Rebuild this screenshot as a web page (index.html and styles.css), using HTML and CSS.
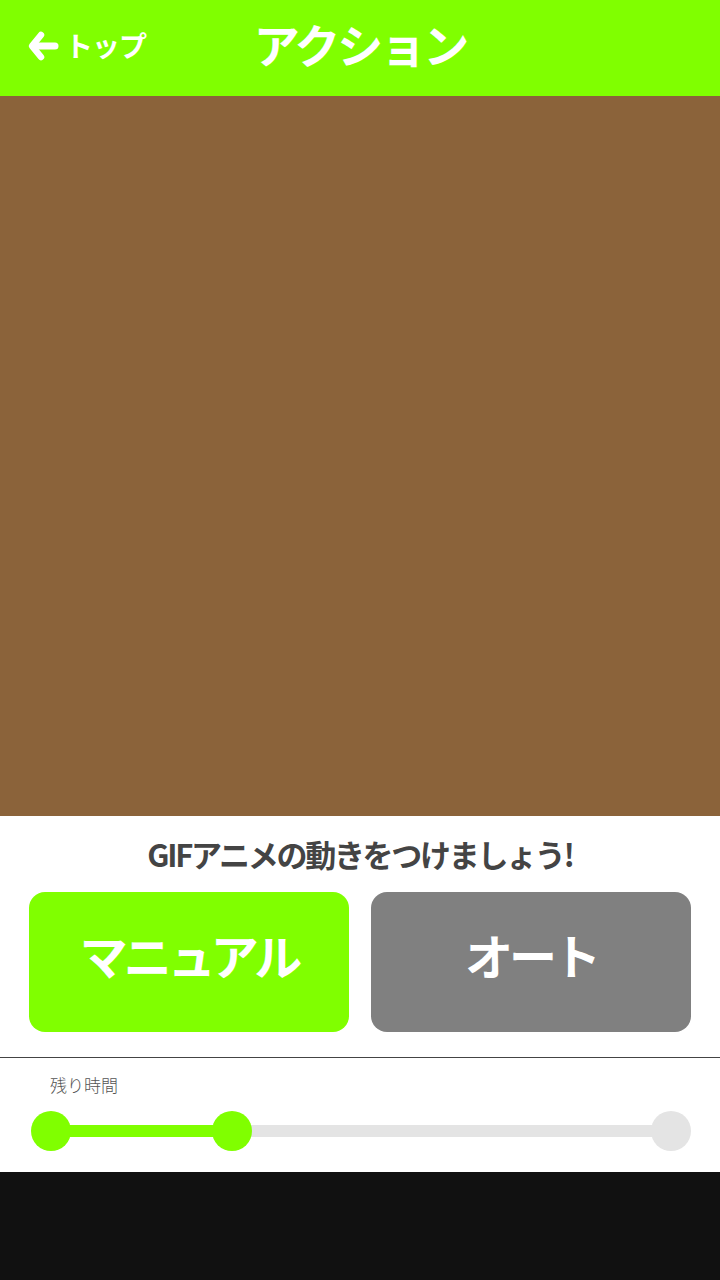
FILE: index.html
```html
<!DOCTYPE html>
<html lang="ja">
<head>
<meta charset="utf-8">
<link rel="stylesheet" href="styles.css">
</head>
<body>
<div class="app">
  <header class="header">
    <a class="back">
      <svg class="back-icon" width="32" height="32" viewBox="0 0 32 32">
        <path d="M14 5 L5 16 L14 27" fill="none" stroke="#fff" stroke-width="6.5" stroke-linecap="round" stroke-linejoin="round"/>
        <path d="M7 16 H28" fill="none" stroke="#fff" stroke-width="7" stroke-linecap="round"/>
      </svg>
      <span class="back-label">トップ</span>
    </a>
    <h1 class="title">アクション</h1>
  </header>
  <main class="canvas"></main>
  <section class="panel">
    <p class="prompt">GIFアニメの動きをつけましょう!</p>
    <div class="buttons">
      <button class="btn btn-manual">マニュアル</button>
      <button class="btn btn-auto">オート</button>
    </div>
  </section>
  <section class="timer">
    <div class="timer-label">残り時間</div>
    <div class="slider">
      <div class="track"></div>
      <div class="fill" style="width:181px"></div>
      <span class="dot dot-start"></span>
      <span class="dot dot-current" style="left:181px"></span>
      <span class="dot dot-end"></span>
    </div>
  </section>
  <footer class="bottom"></footer>
</div>
</body>
</html>
```
FILE: styles.css
```css
* { box-sizing: border-box; }
html, body { margin: 0; padding: 0; }
body {
  width: 720px;
  height: 1280px;
  background: #111111;
  font-family: "Noto Sans CJK JP", "Noto Sans", sans-serif;
}
.app { display: flex; flex-direction: column; height: 1280px; }
.header {
  height: 96px;
  background: #80ff00;
  display: flex;
  align-items: center;
  justify-content: center;
  position: relative;
}
.back {
  position: absolute;
  left: 27px;
  top: 30px;
  display: flex;
  align-items: center;
  gap: 6px;
  color: #fff;
}
.back-icon { display: block; }
.back-label {
  font-size: 28px;
  font-weight: 700;
  letter-spacing: -1px;
  line-height: 32px;
  margin-top: -3px;
}
.title {
  margin: 0;
  color: #fff;
  font-size: 46px;
  font-weight: 700;
  letter-spacing: -3px;
  line-height: 1;
  margin-top: -10px;
}
.canvas {
  height: 720px;
  background: #8b633a;
}
.panel {
  background: #fff;
  padding: 18px 29px 25px;
  border-bottom: 1px solid #444;
}
.prompt {
  margin: 0 0 18px;
  text-align: center;
  font-size: 31px;
  font-weight: 700;
  color: #444;
  letter-spacing: -2.3px;
  line-height: 40px;
}
.buttons {
  display: flex;
  gap: 22px;
}
.btn {
  flex: 1;
  height: 140px;
  border: none;
  border-radius: 16px;
  color: #fff;
  font-family: inherit;
  font-size: 48px;
  font-weight: 700;
  letter-spacing: -4px;
  padding: 0 0 16px;
}
.btn-manual { background: #80ff00; }
.btn-auto { background: #808080; }
.timer {
  background: #fff;
  height: 114px;
  padding: 15px 0 0 31px;
}
.timer-label {
  margin-left: 19px;
  font-size: 17px;
  color: #555;
  line-height: 24px;
  font-weight: 300;
}
.slider {
  position: relative;
  margin-top: 14px;
  width: 620px;
  height: 40px;
}
.track {
  position: absolute;
  left: 20px;
  top: 14px;
  height: 12px;
  background: #e4e4e4;
  width: 620px;
}
.fill {
  position: absolute;
  left: 20px;
  top: 14px;
  height: 12px;
  background: #80ff00;
}
.dot {
  position: absolute;
  top: 0;
  width: 40px;
  height: 40px;
  border-radius: 50%;
  background: #80ff00;
}
.dot-start { left: 0; }
.dot-end { left: 620px; background: #e4e4e4; }
.bottom { flex: 1; background: #111111; }
```
